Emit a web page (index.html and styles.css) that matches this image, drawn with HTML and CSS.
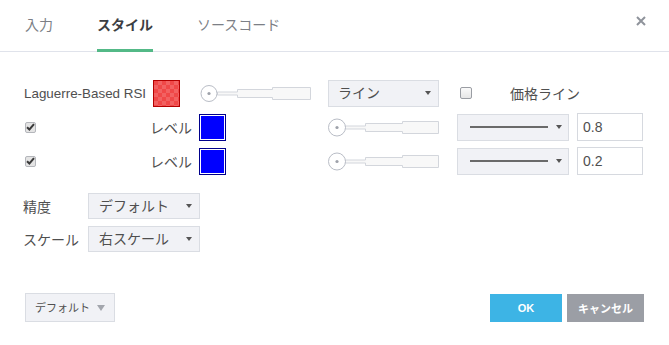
FILE: index.html
```
<!DOCTYPE html>
<html lang="ja">
<head>
    <meta charset="UTF-8">
    <meta name="viewport" content="width=device-width, initial-scale=1.0">
    <title>スタイル</title>
    <link rel="stylesheet" href="styles.css">
</head>
<body>
    <div class="dialog">
        <div class="tabs">
            <div class="tab">入力</div>
            <div class="tab active">スタイル</div>
            <div class="tab">ソースコード</div>
            <button class="close" title="閉じる">
                <svg width="10" height="10" viewBox="0 0 10 10"><path d="M1 1L9 9M9 1L1 9" stroke="#8f939b" stroke-width="2"/></svg>
            </button>
        </div>

        <div class="content">
            <div class="row">
                <span class="study-name">Laguerre-Based RSI</span>
                <span class="swatch swatch-red"></span>
                <span class="slider slider-main">
                    <svg width="111" height="19" viewBox="0 0 111 19">
                        <path d="M17.5 8H37.5V5.5H72.5V3.5H110.5V15.5H72.5V13.5H37.5V11H17.5Z" fill="#f8f8f8" stroke="#d3d6dc"/>
                        <circle cx="9" cy="9.5" r="8" fill="#fff" stroke="#b9bdc6"/>
                        <circle cx="9" cy="9.5" r="1.6" fill="#9ea2aa"/>
                    </svg>
                </span>
                <div class="select select-plot"><span>ライン</span><i class="caret"></i></div>
                <span class="checkbox"></span>
                <span class="price-label">価格ライン</span>
            </div>

            <div class="row">
                <span class="checkbox checked">
                    <svg width="9" height="8" viewBox="0 0 9 8"><path d="M1 4.2L3.4 6.5L8 1.2" fill="none" stroke="#3a3a3a" stroke-width="2"/></svg>
                </span>
                <span class="level-label">レベル</span>
                <span class="swatch swatch-blue"></span>
                <span class="slider slider-level">
                    <svg width="111" height="19" viewBox="0 0 111 19">
                        <path d="M17.5 8H37.5V5.5H74.5V3.5H110.5V15.5H74.5V13.5H37.5V11H17.5Z" fill="#f8f8f8" stroke="#d3d6dc"/>
                        <circle cx="9" cy="9.5" r="8.5" fill="#fff" stroke="#b9bdc6"/>
                        <circle cx="9" cy="9.5" r="1.6" fill="#9ea2aa"/>
                    </svg>
                </span>
                <div class="select select-line"><span class="line-sample"></span><i class="caret"></i></div>
                <input class="value" type="text" value="0.8">
            </div>

            <div class="row">
                <span class="checkbox checked">
                    <svg width="9" height="8" viewBox="0 0 9 8"><path d="M1 4.2L3.4 6.5L8 1.2" fill="none" stroke="#3a3a3a" stroke-width="2"/></svg>
                </span>
                <span class="level-label">レベル</span>
                <span class="swatch swatch-blue"></span>
                <span class="slider slider-level">
                    <svg width="111" height="19" viewBox="0 0 111 19">
                        <path d="M17.5 8H37.5V5.5H74.5V3.5H110.5V15.5H74.5V13.5H37.5V11H17.5Z" fill="#f8f8f8" stroke="#d3d6dc"/>
                        <circle cx="9" cy="9.5" r="8.5" fill="#fff" stroke="#b9bdc6"/>
                        <circle cx="9" cy="9.5" r="1.6" fill="#9ea2aa"/>
                    </svg>
                </span>
                <div class="select select-line"><span class="line-sample"></span><i class="caret"></i></div>
                <input class="value" type="text" value="0.2">
            </div>

            <div class="props">
                <div class="prop">
                    <span class="prop-label">精度</span>
                    <div class="select select-prop"><span>デフォルト</span><i class="caret"></i></div>
                </div>
                <div class="prop">
                    <span class="prop-label">スケール</span>
                    <div class="select select-prop"><span>右スケール</span><i class="caret"></i></div>
                </div>
            </div>
        </div>

        <div class="footer">
            <div class="select select-default"><span>デフォルト</span><i class="caret caret-light"></i></div>
            <div class="actions">
                <button class="btn btn-ok">OK</button>
                <button class="btn btn-cancel">キャンセル</button>
            </div>
        </div>
    </div>
</body>
</html>
```

FILE: styles.css
```
body {
    margin: 0;
    background-color: #fff;
    font-family: "Liberation Sans", "Noto Sans CJK JP", sans-serif;
    font-size: 14px;
    color: #4f4f4f;
}
.dialog {
    width: 669px;
    height: 345px;
    box-sizing: border-box;
}

/* tabs */
.tabs {
    display: flex;
    align-items: flex-start;
    height: 52px;
    box-sizing: border-box;
    padding-left: 25px;
    border-bottom: 1px solid #e0e3eb;
}
.tab {
    display: flex;
    align-items: center;
    height: 52px;
    box-sizing: border-box;
    margin-right: 44px;
    border-bottom: 3px solid transparent;
    color: #7c7f86;
    font-size: 14px;
    line-height: 16px;
}
.tab.active {
    border-bottom-color: #53b987;
    color: #3c3e43;
    font-weight: bold;
}
.close {
    margin-left: auto;
    margin-right: 23px;
    margin-top: 16px;
    padding: 0;
    width: 10px;
    height: 10px;
    border: none;
    background: none;
    line-height: 0;
}

/* main rows */
.content {
    padding: 24px 0 0 24px;
}
.row {
    display: flex;
    align-items: center;
    height: 34px;
}
.study-name {
    width: 129px;
    font-size: 13.4px;
    white-space: nowrap;
}
.swatch {
    width: 27px;
    height: 27px;
    box-sizing: border-box;
    flex-shrink: 0;
}
.swatch-red {
    border: 1px solid #b40000;
    background-color: #f04848;
    background-image: conic-gradient(#f26262 25%, transparent 0 50%, #f26262 0 75%, transparent 0);
    background-size: 8px 8px;
}
.swatch-blue {
    border: 1px solid #00008b;
    box-shadow: inset 0 0 0 1px #fff;
    background-color: #0000ff;
}
.slider {
    display: flex;
    width: 111px;
    height: 19px;
}
.slider-main {
    margin-left: 20px;
}
.slider-level {
    margin-left: 102px;
}

/* selects */
.select {
    display: flex;
    align-items: center;
    height: 27px;
    box-sizing: border-box;
    border: 1px solid #dadde3;
    background-color: #f1f2f6;
    color: #4f4f4f;
    line-height: 16px;
}
.caret {
    width: 0;
    height: 0;
    margin-left: auto;
    border-left: 3.5px solid transparent;
    border-right: 3.5px solid transparent;
    border-top: 4px solid #555;
}
.select-plot {
    width: 111px;
    margin-left: 17px;
    padding: 0 7px 0 9px;
}
.select-line {
    width: 112px;
    margin-left: 18px;
    padding: 0 6px 0 12px;
}
.line-sample {
    width: 78px;
    height: 2px;
    background-color: #6a6a6a;
}
.select-prop {
    width: 112px;
    height: 26px;
    padding: 0 7px 0 10px;
}

/* checkboxes */
.checkbox {
    width: 12px;
    height: 12px;
    box-sizing: border-box;
    margin-left: 21px;
    border: 1px solid #9a9da3;
    border-radius: 2px;
    background: linear-gradient(#fafafa, #e6e6e6);
}
.checkbox.checked {
    display: flex;
    align-items: center;
    justify-content: center;
    width: 11px;
    height: 11px;
    margin-left: 1px;
    border-color: #b4b6bb;
    background: #e4e4e4;
}
.price-label {
    margin-left: 38px;
}
.level-label {
    margin-left: 114px;
    margin-right: 8px;
    width: 41px;
    white-space: nowrap;
}
.value {
    width: 66px;
    height: 28px;
    box-sizing: border-box;
    margin-left: 8px;
    padding: 0 5px;
    border: 1px solid #d6d9df;
    font-family: "Liberation Sans", sans-serif;
    font-size: 14px;
    color: #4f4f4f;
    outline: none;
}

/* precision / scale */
.props {
    margin-top: 14px;
}
.prop {
    display: flex;
    align-items: center;
    height: 27px;
    margin-bottom: 6px;
}
.prop-label {
    width: 65px;
    margin-left: -1px;
    white-space: nowrap;
}

/* footer */
.footer {
    display: flex;
    align-items: center;
    justify-content: space-between;
    margin-top: 41px;
    padding: 0 25px;
}
.select-default {
    width: 90px;
    height: 29px;
    padding: 0 9px 0 9px;
    font-size: 11px;
}
.caret-light {
    border-left-width: 4.5px;
    border-right-width: 4.5px;
    border-top: 6px solid #a3a6ad;
}
.actions {
    display: flex;
    gap: 5px;
}
.btn {
    height: 28px;
    border: none;
    color: #fff;
    font-family: "Liberation Sans", "Noto Sans CJK JP", sans-serif;
    font-weight: bold;
    font-size: 11px;
    cursor: pointer;
}
.btn-ok {
    width: 72px;
    background-color: #3db4e5;
}
.btn-cancel {
    width: 77px;
    background-color: #9b9ea5;
}
```
